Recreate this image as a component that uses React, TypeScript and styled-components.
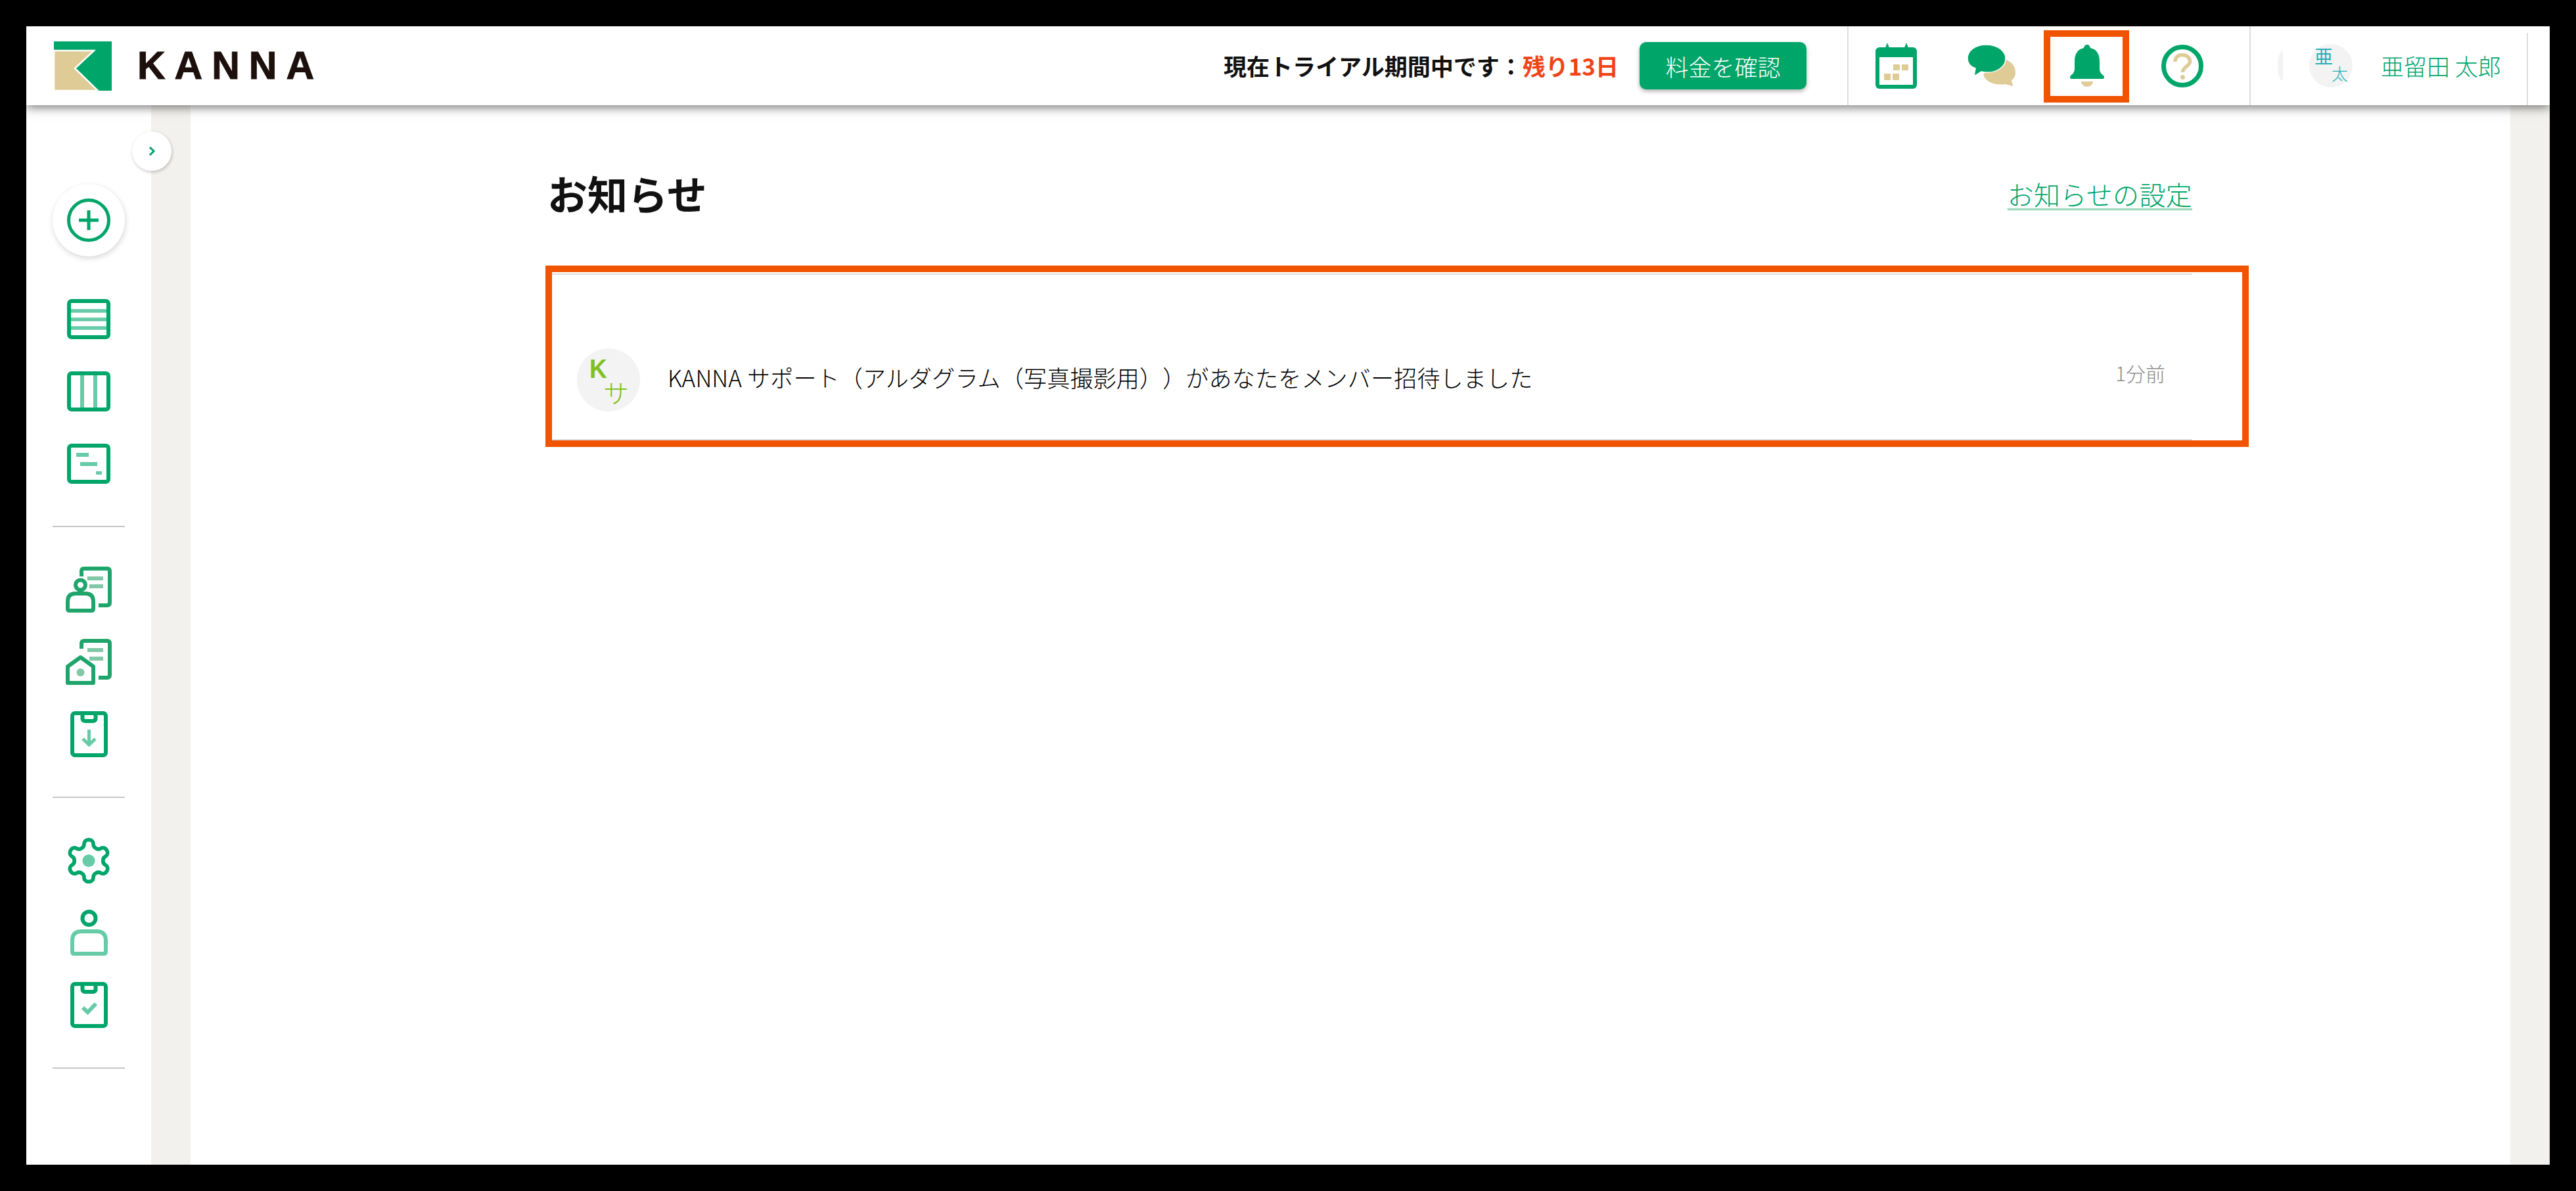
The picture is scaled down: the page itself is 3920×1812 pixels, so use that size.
import React from "react";
import styled, { createGlobalStyle } from "styled-components";

const GREEN = "#00a56a";
const SOFT = "#66cba6";
const DOC = "#1fa56b";
const TAN = "#dfcb96";
const ORANGE = "#f05400";
const JP = `"Noto Sans CJK JP", "Noto Sans", sans-serif`;

const Global = createGlobalStyle`
  html, body { margin: 0; padding: 0; background: #000; }
  * { box-sizing: border-box; }
  body { font-family: ${JP}; }
`;

const Frame = styled.div`
  width: 3920px;
  height: 1812px;
  padding: 40px;
  background: #000;
  overflow: hidden;
`;
const Page = styled.div`
  width: 3840px;
  height: 1732px;
  display: flex;
  flex-direction: column;
  background: #fff;
  overflow: hidden;
`;

/* ---------- top bar ---------- */
const TopBar = styled.header`
  position: relative;
  z-index: 3;
  flex: 0 0 120px;
  display: flex;
  align-items: center;
  background: #fff;
  box-shadow: 0 4px 14px rgba(0, 0, 0, 0.5);
`;
const Brand = styled.div`
  display: flex;
  align-items: center;
  padding-left: 42px;
  gap: 39px;
`;
const Wordmark = styled.span`
  font-family: "Liberation Sans", sans-serif;
  font-weight: 700;
  font-size: 59px;
  line-height: 60px;
  letter-spacing: 14px;
  color: #1c0f0c;
  -webkit-text-stroke: 1px #1c0f0c;
`;
const Trial = styled.div`
  margin-left: auto;
  font-size: 35px;
  font-weight: 700;
  line-height: 50px;
  color: #111;
  white-space: nowrap;
`;
const Remain = styled.span`
  color: #f04416;
`;
const PriceButton = styled.button`
  width: 254px;
  height: 72px;
  margin: 0 62px 0 32px;
  border: 0;
  border-radius: 10px;
  background: ${GREEN};
  color: #fff;
  font-family: ${JP};
  font-size: 35px;
  font-weight: 300;
  box-shadow: 0 3px 6px rgba(0, 0, 0, 0.3);
`;
const NavGroup = styled.nav`
  height: 120px;
  display: flex;
  padding-right: 30px;
  border-left: 2px solid #ddd;
  border-right: 2px solid #ddd;
`;
const NavCell = styled.div`
  position: relative;
  width: 145px;
  height: 120px;
  display: flex;
  align-items: center;
  justify-content: center;
`;
const BellHighlight = styled.span`
  position: absolute;
  left: 7px;
  top: 6px;
  width: 130px;
  height: 110px;
  border: 10px solid ${ORANGE};
`;
const UserArea = styled.div`
  position: relative;
  height: 120px;
  display: flex;
  align-items: center;
  padding-left: 41px;
  width: 455px;
`;
const PeekAvatar = styled.span`
  flex: none;
  width: 8px;
  height: 46px;
  margin-right: 40px;
  border-radius: 8px 0 0 8px / 23px 0 0 23px;
  background: #f3f3f3;
`;
const UserAvatar = styled.div`
  position: relative;
  width: 66px;
  height: 66px;
  border-radius: 50%;
  background: #f3f3f3;
  flex: none;
`;
const AvatarFamily = styled.span`
  position: absolute;
  left: 8px;
  top: 0;
  font-size: 28px;
  line-height: 36px;
  color: #22b0b4;
`;
const AvatarGiven = styled.span`
  position: absolute;
  left: 34px;
  top: 26px;
  font-size: 25px;
  line-height: 36px;
  font-weight: 300;
  color: #22b0b4;
`;
const UserName = styled.span`
  margin-left: 43px;
  font-size: 35px;
  line-height: 50px;
  font-weight: 300;
  color: ${GREEN};
  white-space: nowrap;
`;
const EdgeRule = styled.span`
  position: absolute;
  right: 33px;
  top: 10px;
  bottom: 0;
  width: 2px;
  background: #ddd;
`;

/* ---------- body ---------- */
const Body = styled.div`
  position: relative;
  flex: 1;
  display: flex;
  min-height: 0;
`;
const SideBar = styled.aside`
  flex: 0 0 190px;
  display: flex;
  flex-direction: column;
  align-items: center;
  padding-top: 120px;
  background: #fff;
`;
const Toggle = styled.button`
  position: absolute;
  left: 161px;
  top: 40px;
  z-index: 2;
  width: 60px;
  height: 60px;
  padding: 0;
  border: 0;
  border-radius: 50%;
  background: #fff;
  box-shadow: 1px 2px 5px rgba(0, 0, 0, 0.22);
  display: flex;
  align-items: center;
  justify-content: center;
`;
const AddButton = styled.button`
  width: 110px;
  height: 110px;
  padding: 0;
  border: 0;
  border-radius: 50%;
  background: #fff;
  box-shadow: 1px 3px 9px rgba(0, 0, 0, 0.16);
  display: flex;
  align-items: center;
  justify-content: center;
  margin-bottom: 40px;
`;
const NavSlot = styled.div`
  width: 110px;
  height: 110px;
  display: flex;
  align-items: center;
  justify-content: center;
`;
const SideRule = styled.hr`
  width: 110px;
  height: 2px;
  margin: 40px 0;
  border: 0;
  background: #c6c6c6;
  flex: none;
`;
const Gutter = styled.div`
  flex: 0 0 60px;
  background: #f2f1ed;
`;
const Main = styled.main`
  flex: 1;
  min-width: 0;
  padding: 0 0 0 545px;
  background: #fff;
`;
const Column = styled.div`
  width: 2501px;
`;
const TitleRow = styled.div`
  height: 256px;
  display: flex;
  justify-content: space-between;
  align-items: flex-start;
  padding-top: 94px;
`;
const Title = styled.h1`
  margin: 0 0 0 -2px;
  font-size: 61px;
  line-height: 80px;
  font-weight: 700;
  color: #111;
`;
const SettingsLink = styled.a`
  margin-top: 13px;
  font-size: 40px;
  line-height: 56px;
  font-weight: 300;
  letter-spacing: 0.3px;
  color: ${GREEN};
  text-decoration: underline;
  text-decoration-color: #9dd9bf;
  text-decoration-thickness: 3px;
  text-underline-offset: 5px;
`;
const NoticeWrap = styled.div`
  position: relative;
`;
const NoticeHighlight = styled.span`
  position: absolute;
  left: -5px;
  top: -12px;
  width: 2592px;
  height: 276px;
  border: 10px solid ${ORANGE};
`;
const Notice = styled.div`
  height: 254px;
  display: flex;
  align-items: flex-end;
  padding: 0 41px 42px 43px;
  border-top: 2px solid #ddd;
  border-bottom: 2px solid #ddd;
`;
const NoticeAvatar = styled.div`
  position: relative;
  flex: none;
  width: 96px;
  height: 96px;
  border-radius: 50%;
  background: #f3f3f3;
`;
const AvatarK = styled.span`
  position: absolute;
  left: 19px;
  top: 9px;
  font-family: "Liberation Sans", sans-serif;
  font-weight: 700;
  font-size: 41px;
  line-height: 45px;
  color: #80c020;
  transform: scaleX(0.9);
  transform-origin: left center;
`;
const AvatarSa = styled.span`
  position: absolute;
  left: 40px;
  top: 41px;
  font-size: 39px;
  line-height: 50px;
  font-weight: 300;
  color: #80c020;
`;
const Message = styled.div`
  flex: 1;
  margin: 0 0 27px 42px;
  font-size: 35px;
  line-height: 50px;
  font-weight: 300;
  letter-spacing: 0.2px;
  color: #000;
  white-space: nowrap;
  text-spacing-trim: space-all;
`;
const Ago = styled.div`
  margin-bottom: 37px;
  font-size: 30px;
  line-height: 44px;
  font-weight: 300;
  color: #8a8a8a;
`;

/* ---------- drawings ---------- */
const LogoMark = () => (
  <svg width="88" height="75" viewBox="0 0 88 75">
    <rect width="88" height="75" fill={GREEN} />
    <polygon points="0,14 61,14 32,41 67,75 0,75" fill={TAN} stroke="#fff" strokeWidth="2.5" />
    <rect x="0" y="76" width="88" height="1" fill="#fff" />
  </svg>
);
const CalendarIcon = () => (
  <svg width="63" height="70" viewBox="0 0 63 70">
    <path d="M14 10 L18 0 L22 10 Z M43 10 L47 0 L51 10 Z" fill={GREEN} />
    <rect x="0" y="7" width="63" height="63" rx="6" fill={GREEN} />
    <rect x="6" y="22" width="51" height="42" fill="#fff" />
    <g fill={TAN}>
      <rect x="27" y="33" width="10" height="9" />
      <rect x="40" y="33" width="10" height="9" />
      <rect x="13" y="47" width="10" height="10" />
      <rect x="26" y="47" width="10" height="10" />
    </g>
  </svg>
);
const ChatIcon = () => (
  <svg width="73" height="64" viewBox="0 0 73 64">
    <path d="M40 24 C58 17 73 28 73 42 C73 48 70 52 67 54 L69 63 L57 60 C44 62 28 58 24 46 Z" fill={TAN} />
    <path
      d="M28.5 0 C45 0 58 9 58 21 C58 34 44 43 28 42 C25 42 23 41 21 41 L10 48 L12 36 C4 33 0 27 0 21 C0 9 12 0 28.5 0 Z"
      fill={GREEN}
      stroke="#fff"
      strokeWidth="1.5"
    />
  </svg>
);
const BellIcon = () => (
  <svg width="52" height="64" viewBox="0 0 52 64">
    <path
      d="M26 0 C23 0 21.5 2 21 5 C11 7 7 15 7 25 V36 C7 42 4 45 1 47 Q0 48 0 50 Q0 52 2 52 H50 Q52 52 52 50 Q52 48 51 47 C48 45 45 42 45 36 V25 C45 15 41 7 31 5 C30.5 2 29 0 26 0 Z"
      fill={GREEN}
    />
    <path d="M17 56 H35 C35 60 31 64 26 64 C21 64 17 60 17 56 Z" fill={TAN} />
  </svg>
);
const HelpIcon = () => (
  <svg width="64" height="65" viewBox="0 0 64 65">
    <ellipse cx="32" cy="32.5" rx="28.5" ry="29" fill="none" stroke={GREEN} strokeWidth="7" />
    <path
      d="M21 26 C21 19 26 15.5 32 15.5 C39 15.5 43.5 20 43.5 25.5 C43.5 33 32.5 33.5 32.5 42"
      fill="none"
      stroke={TAN}
      strokeWidth="5.5"
    />
    <circle cx="32.5" cy="49.5" r="3.5" fill={TAN} />
  </svg>
);
const Chevron = () => (
  <svg width="12" height="16" viewBox="0 0 12 16">
    <path d="M3 2 L9 8 L3 14" fill="none" stroke={GREEN} strokeWidth="3" />
  </svg>
);
const PlusCircle = () => (
  <svg width="66" height="66" viewBox="0 0 66 66">
    <circle cx="33" cy="33" r="30.5" fill="none" stroke={GREEN} strokeWidth="5" />
    <path d="M18 33 H48 M33 18 V48" fill="none" stroke={GREEN} strokeWidth="5" />
  </svg>
);
const ListIcon = () => (
  <svg width="66" height="61" viewBox="0 0 66 61">
    <path d="M3 18 H63 M3 31 H63 M3 44 H63" stroke={SOFT} strokeWidth="5.5" fill="none" />
    <rect x="3" y="3" width="60" height="55" rx="4" fill="none" stroke={GREEN} strokeWidth="6" />
  </svg>
);
const BoardIcon = () => (
  <svg width="66" height="61" viewBox="0 0 66 61">
    <path d="M23 3 V58 M43 3 V58" stroke={SOFT} strokeWidth="6" fill="none" />
    <rect x="3" y="3" width="60" height="55" rx="4" fill="none" stroke={GREEN} strokeWidth="6" />
  </svg>
);
const GanttIcon = () => (
  <svg width="66" height="61" viewBox="0 0 66 61">
    <g fill={SOFT}>
      <rect x="14" y="14" width="19" height="6" />
      <rect x="20" y="28" width="26" height="6" />
      <rect x="44" y="42" width="9" height="5" />
    </g>
    <rect x="3" y="3" width="60" height="55" rx="4" fill="none" stroke={GREEN} strokeWidth="6" />
  </svg>
);
const docPath = "M24 15 V7 Q24 3 28 3 H63 Q67 3 67 7 V55 Q67 59 63 59 H50";
const CustomerDocIcon = () => (
  <svg width="70" height="70" viewBox="0 0 70 70">
    <path d="M33 18 H57 M36 30 H57" stroke="#80c8a6" strokeWidth="6" fill="none" />
    <path d={docPath} fill="none" stroke={DOC} strokeWidth="6" />
    <circle cx="22.5" cy="28" r="7.5" fill="none" stroke={DOC} strokeWidth="6" />
    <path d="M3 53 Q3 41 15 41 H30 Q42 41 42 53 V64 Q42 67 39 67 H6 Q3 67 3 64 Z" fill="none" stroke={DOC} strokeWidth="6" />
  </svg>
);
const SiteDocIcon = () => (
  <svg width="70" height="70" viewBox="0 0 70 70">
    <path d="M33 17 H57 M36 30 H57" stroke="#80c8a6" strokeWidth="6" fill="none" />
    <path d={docPath} fill="none" stroke={DOC} strokeWidth="6" />
    <path d="M22.5 28 L42 42 V67 H3 V42 Z" fill="#fff" stroke={DOC} strokeWidth="6" strokeLinejoin="round" />
    <circle cx="22.5" cy="51" r="6" fill="#80c8a6" />
  </svg>
);
const Clipboard = ({ children }: { children: React.ReactNode }) => (
  <svg width="57" height="70" viewBox="0 0 57 70">
    <rect x="3" y="3" width="51" height="64" rx="4" fill="none" stroke={GREEN} strokeWidth="6" />
    <path d="M18.5 3 V11 Q18.5 15 23 15 H34 Q38.5 15 38.5 11 V3" fill="none" stroke={GREEN} strokeWidth="6" />
    {children}
  </svg>
);
const GearIcon = () => (
  <svg width="70" height="71" viewBox="1 1 22 22">
    <path
      d="M12.22 2h-.44a2 2 0 0 0-2 2v.18a2 2 0 0 1-1 1.73l-.43.25a2 2 0 0 1-2 0l-.15-.08a2 2 0 0 0-2.73.73l-.22.38a2 2 0 0 0 .73 2.73l.15.1a2 2 0 0 1 1 1.72v.51a2 2 0 0 1-1 1.74l-.15.09a2 2 0 0 0-.73 2.73l.22.38a2 2 0 0 0 2.73.73l.15-.08a2 2 0 0 1 2 0l.43.25a2 2 0 0 1 1 1.73V20a2 2 0 0 0 2 2h.44a2 2 0 0 0 2-2v-.18a2 2 0 0 1 1-1.73l.43-.25a2 2 0 0 1 2 0l.15.08a2 2 0 0 0 2.73-.73l.22-.39a2 2 0 0 0-.73-2.73l-.15-.08a2 2 0 0 1-1-1.74v-.5a2 2 0 0 1 1-1.74l.15-.09a2 2 0 0 0 .73-2.73l-.22-.38a2 2 0 0 0-2.73-.73l-.15.08a2 2 0 0 1-2 0l-.43-.25a2 2 0 0 1-1-1.73V4a2 2 0 0 0-2-2z"
      fill="none"
      stroke={GREEN}
      strokeWidth="1.8"
    />
    <circle cx="12" cy="12" r="3" fill={SOFT} />
  </svg>
);
const PersonIcon = () => (
  <svg width="57" height="70" viewBox="0 0 57 70">
    <circle cx="28.5" cy="13" r="10" fill="none" stroke={GREEN} strokeWidth="6" />
    <path d="M3 47 Q3 33 17 33 H40 Q54 33 54 47 V64 Q54 67 51 67 H6 Q3 67 3 64 Z" fill="none" stroke={SOFT} strokeWidth="6" />
  </svg>
);

const groups: React.ReactNode[][] = [
  [<ListIcon />, <BoardIcon />, <GanttIcon />],
  [
    <CustomerDocIcon />,
    <SiteDocIcon />,
    <Clipboard>
      <path d="M28.5 28 V51 M19 42 L28.5 51 L38 42" fill="none" stroke={SOFT} strokeWidth="5" />
    </Clipboard>,
  ],
  [
    <GearIcon />,
    <PersonIcon />,
    <Clipboard>
      <path d="M19 39 L26.5 46 L39 33" fill="none" stroke={SOFT} strokeWidth="6" />
    </Clipboard>,
  ],
];

export default function App() {
  return (
    <Frame>
      <Global />
      <Page>
        <TopBar>
          <Brand>
            <LogoMark />
            <Wordmark>KANNA</Wordmark>
          </Brand>
          <Trial>
            現在トライアル期間中です：<Remain>残り13日</Remain>
          </Trial>
          <PriceButton>料金を確認</PriceButton>
          <NavGroup>
            <NavCell><CalendarIcon /></NavCell>
            <NavCell><ChatIcon /></NavCell>
            <NavCell>
              <BellIcon />
              <BellHighlight />
            </NavCell>
            <NavCell><HelpIcon /></NavCell>
          </NavGroup>
          <UserArea>
            <PeekAvatar />
            <UserAvatar>
              <AvatarFamily>亜</AvatarFamily>
              <AvatarGiven>太</AvatarGiven>
            </UserAvatar>
            <UserName>亜留田 太郎</UserName>
            <EdgeRule />
          </UserArea>
        </TopBar>
        <Body>
          <SideBar>
            <AddButton><PlusCircle /></AddButton>
            {groups.map((items, g) => (
              <React.Fragment key={g}>
                {items.map((icon, i) => (
                  <NavSlot key={i}>{icon}</NavSlot>
                ))}
                <SideRule />
              </React.Fragment>
            ))}
          </SideBar>
          <Toggle><Chevron /></Toggle>
          <Gutter />
          <Main>
            <Column>
              <TitleRow>
                <Title>お知らせ</Title>
                <SettingsLink>お知らせの設定</SettingsLink>
              </TitleRow>
              <NoticeWrap>
                <Notice>
                  <NoticeAvatar>
                    <AvatarK>K</AvatarK>
                    <AvatarSa>サ</AvatarSa>
                  </NoticeAvatar>
                  <Message>KANNA サポート（アルダグラム（写真撮影用））があなたをメンバー招待しました</Message>
                  <Ago>1分前</Ago>
                </Notice>
                <NoticeHighlight />
              </NoticeWrap>
            </Column>
          </Main>
          <Gutter />
        </Body>
      </Page>
    </Frame>
  );
}
